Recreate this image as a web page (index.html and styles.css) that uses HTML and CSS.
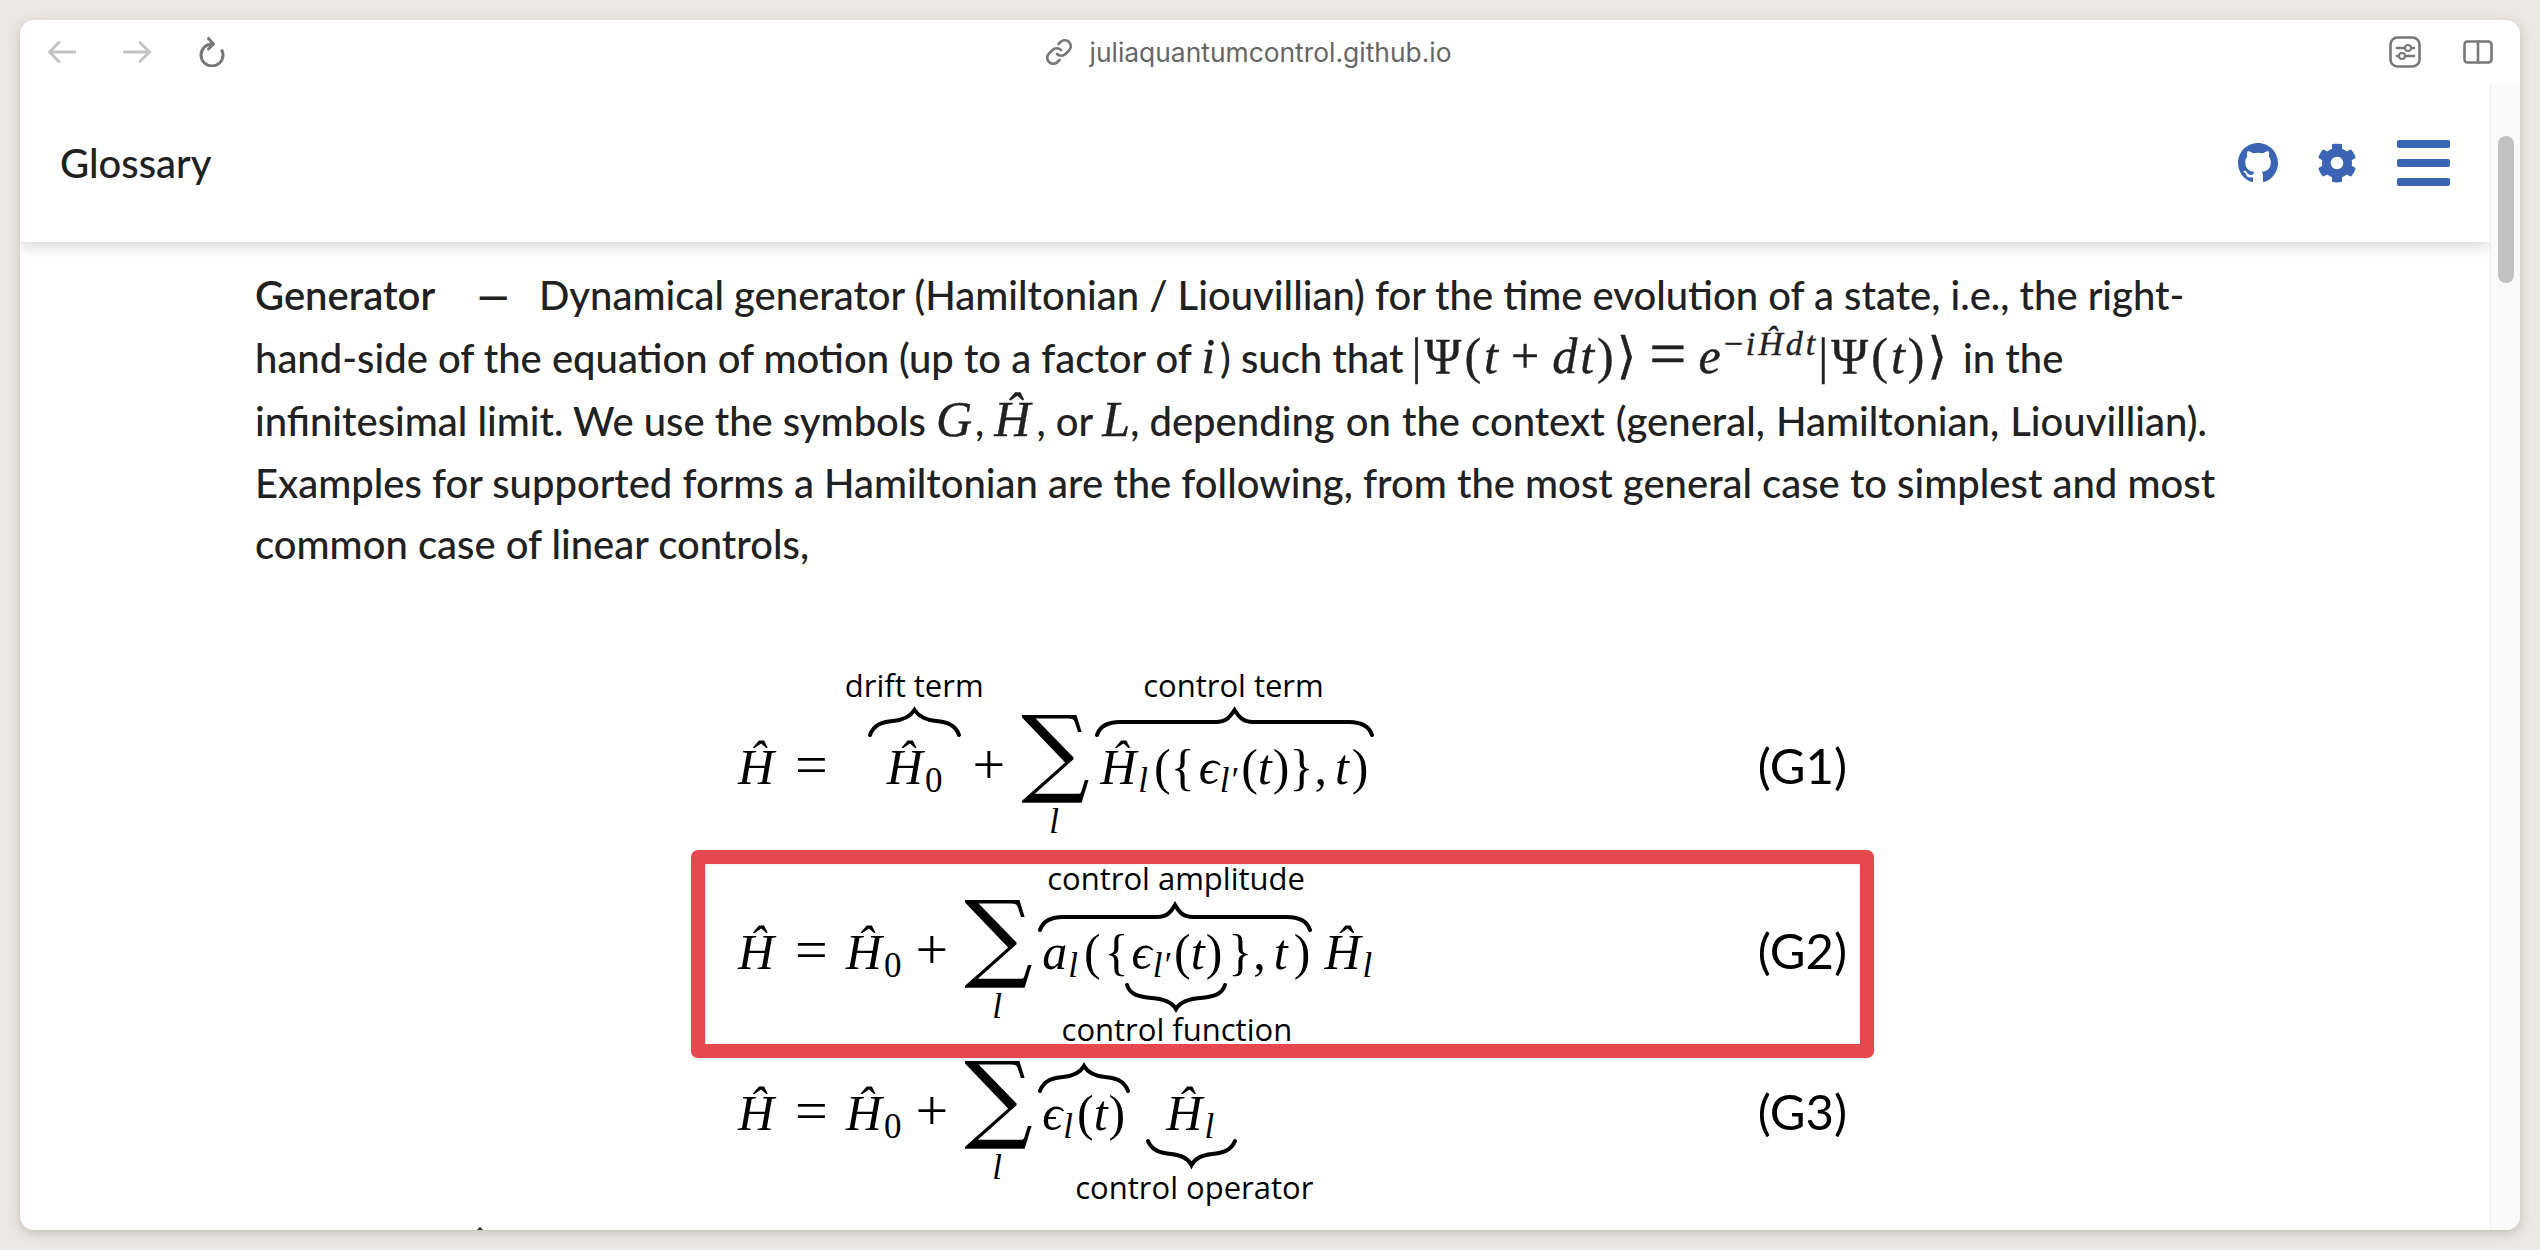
FILE: index.html
```html
<!DOCTYPE html>
<html lang="en">
<head>
<meta charset="utf-8">
<title>Glossary</title>
<link rel="stylesheet" href="styles.css">
</head>
<body>
<div class="window">
  <div class="toolbar">
    <div class="tb-left">
      <svg class="ic-arrow" viewBox="0 0 28 22"><path d="M27 11H2M11 1.500L1.500 11l9.500 9.500"/></svg>
      <svg class="ic-arrow" viewBox="0 0 28 22"><path d="M1 11h25M17 1.500L26.500 11 17 20.500"/></svg>
      <svg class="ic-reload" viewBox="0 0 26 30"><path d="M13 7a11 11 0 1 0 11 11c0-1.800-.4-3.200-1-4.500M9.500 1.500L14.500 7l-5 5"/></svg>
    </div>
    <div class="url">
      <svg class="ic-link" viewBox="0 0 26 26"><path d="M11 15a6 6 0 0 0 8.500 0l3.500-3.500a6 6 0 0 0-8.500-8.500l-2 2M15 11a6 6 0 0 0-8.500 0L3 14.500a6 6 0 0 0 8.500 8.500l2-2"/></svg>
      <span>juliaquantumcontrol.github.io</span>
    </div>
    <div class="tb-right">
      <svg class="ic-sliders" viewBox="0 0 32 32"><rect x="1.500" y="1.500" width="29" height="29" rx="7"/><path d="M8 12h17M8 20h17"/><circle class="dot" cx="19" cy="12" r="3"/><circle class="dot" cx="13" cy="20" r="3"/></svg>
      <svg class="ic-split" viewBox="0 0 30 24"><rect x="1.500" y="1.500" width="27" height="21" rx="3"/><path d="M15 1.500v21"/></svg>
    </div>
  </div>
  <div class="page">
    <div class="main">
      <header class="header">
        <h1 class="title">Glossary</h1>
        <div class="actions">
          <svg class="ic-gh" viewBox="0 0 16 16"><path d="M8 0C3.580 0 0 3.580 0 8c0 3.540 2.290 6.530 5.470 7.590.4.070.55-.17.55-.38 0-.19-.01-.82-.01-1.490-2.010.37-2.530-.49-2.690-.94-.09-.23-.48-.94-.82-1.130-.28-.15-.68-.52-.01-.53.63-.01 1.080.58 1.230.82.72 1.210 1.870.87 2.330.66.070-.52.28-.87.51-1.070-1.780-.2-3.640-.89-3.640-3.950 0-.87.31-1.590.82-2.150-.08-.2-.36-1.020.08-2.120 0 0 .67-.21 2.200.82.64-.18 1.320-.27 2-.27.68 0 1.360.09 2 .27 1.530-1.040 2.200-.82 2.200-.82.44 1.100.16 1.920.08 2.120.51.56.82 1.270.82 2.150 0 3.070-1.870 3.750-3.650 3.950.29.25.54.73.54 1.480 0 1.070-.01 1.930-.01 2.200 0 .21.15.46.55.38A8.013 8.013 0 0 0 16 8c0-4.420-3.580-8-8-8z"/></svg>
          <svg class="ic-gear" viewBox="0 0 512 512"><path d="M487.400 315.700l-42.600-24.600c4.300-23.200 4.300-47 0-70.200l42.600-24.600c4.900-2.800 7.100-8.600 5.500-14-11.100-35.600-30-67.800-54.700-94.600-3.800-4.100-10-5.100-14.800-2.300L380.800 110c-17.900-15.400-38.500-27.300-60.800-35.100V25.800c0-5.600-3.900-10.500-9.400-11.700-36.700-8.200-74.300-7.800-109.200 0-5.500 1.200-9.400 6.100-9.400 11.700V75c-22.200 7.900-42.800 19.800-60.800 35.100L88.700 85.500c-4.900-2.800-11-1.900-14.800 2.300-24.700 26.700-43.600 58.900-54.700 94.600-1.700 5.400.6 11.200 5.500 14L67.300 221c-4.300 23.200-4.300 47 0 70.200l-42.600 24.600c-4.900 2.800-7.100 8.600-5.500 14 11.100 35.600 30 67.800 54.700 94.600 3.800 4.100 10 5.100 14.800 2.300l42.600-24.600c17.900 15.400 38.500 27.300 60.800 35.100v49.200c0 5.600 3.900 10.500 9.400 11.700 36.700 8.200 74.300 7.800 109.200 0 5.500-1.200 9.400-6.100 9.400-11.700v-49.200c22.200-7.900 42.800-19.800 60.800-35.100l42.600 24.600c4.900 2.800 11 1.900 14.800-2.300 24.700-26.700 43.600-58.900 54.700-94.600 1.500-5.500-.7-11.300-5.600-14.100zM256 336c-44.100 0-80-35.900-80-80s35.900-80 80-80 80 35.900 80 80-35.900 80-80 80z"/></svg>
          <div class="burger"><span></span><span></span><span></span></div>
        </div>
      </header>
      <article class="article">
        <p class="para">
          <span class="ln ln1"><span class="term">Generator</span><span class="dash">—</span>Dynamical generator (Hamiltonian / Liouvillian) for the time evolution of a state, i.e., the right-</span>
          <span class="ln ln2">hand-side of the equation of motion (up to a factor of <i class="im im-i">i</i>) such that <span class="im-r">|Ψ(<i>t</i><span class="bin">+</span><i>dt</i>)⟩<span class="rel">=</span><i>e</i><sup>−<i>iĤdt</i></sup>|Ψ(<i>t</i>)⟩</span> in the</span>
          <span class="ln ln3">infinitesimal limit. We use the symbols <i class="im pad3">G</i>, <i class="im pad6">Ĥ</i>, or <i class="im">L</i>, <span class="tail">depending on the context (general, Hamiltonian, Liouvillian).</span></span>
          <span class="ln ln4">Examples for supported forms a Hamiltonian are the following, from the most general case to simplest and most</span>
          <span class="ln ln5">common case of linear controls,</span>
        </p>

        <div class="eqs">
          <div class="eq r1">
            <i>Ĥ</i><span class="op ml21">=</span>
            <span class="over b-h0 ml59">
              <i>Ĥ</i><span class="sub ml2">0</span>
              <svg class="brace bo1" viewBox="0 0 91 26"><path d="M1 26C5 15 14 13 24 12 34 11 41 8 45.500 1 50 8 57 11 67 12 77 13 86 15 90 26"/></svg>
              <span class="label lb1">drift term</span>
            </span>
            <span class="op ml30">+</span>
            <span class="sum ml16">∑<i class="sum-l">l</i></span>
            <span class="over ml14">
              <i>Ĥ</i><i class="sub ml2">l</i><span class="ml6">(</span><span>{</span><i class="ml4">ϵ</i><i class="sub ml1">l′</i><span class="ml4">(</span><i>t</i><span class="ml1">)</span><span>}</span><span class="ml1">,</span><i class="ml8">t</i><span class="ml3">)</span>
              <svg class="brace bo2" viewBox="0 0 277 26"><path d="M1 26C4 17 12 13 24 13H120C130 13 134 8 138.500 1 143 8 147 13 157 13H253C265 13 273 17 276 26"/></svg>
              <span class="label lb2">control term</span>
            </span>
            <span class="tag">(G1)</span>
          </div>

          <div class="eq r2">
            <i>Ĥ</i><span class="op ml21">=</span>
            <i class="ml18">Ĥ</i><span class="sub ml2">0</span>
            <span class="op ml14">+</span>
            <span class="sum ml16">∑<i class="sum-l">l</i></span>
            <span class="over ml13">
              <i>a</i><i class="sub ml1">l</i><span class="ml6">(</span><span class="ml4">{</span>
              <span class="under ml3"><i>ϵ</i><i class="sub ml1">l′</i><span class="ml4">(</span><i>t</i><span class="ml1">)</span>
                <svg class="brace bu1" viewBox="0 0 100 26"><path d="M1 1C4 11 14 13 26 14 38 15 46 18 50 25 54 18 62 15 74 14 86 13 96 11 99 1"/></svg>
                <span class="label lb3">control function</span>
              </span>
              <span class="ml6">}</span><span class="ml1">,</span><i class="ml8">t</i><span class="ml6">)</span>
              <svg class="brace bo3" viewBox="0 0 272 26"><path d="M1 26C4 17 12 13 24 13H118C128 13 132 8 136 1 140 8 144 13 154 13H248C260 13 268 17 271 26"/></svg>
              <span class="label lb4">control amplitude</span>
            </span>
            <i class="ml14">Ĥ</i><i class="sub ml2">l</i>
            <span class="tag">(G2)</span>
          </div>

          <div class="eq r3">
            <i>Ĥ</i><span class="op ml21">=</span>
            <i class="ml18">Ĥ</i><span class="sub ml2">0</span>
            <span class="op ml14">+</span>
            <span class="sum ml16">∑<i class="sum-l">l</i></span>
            <span class="over ml13">
              <i>ϵ</i><i class="sub ml1">l</i><span class="ml4">(</span><i>t</i><span class="ml1">)</span>
              <svg class="brace bo4" viewBox="0 0 90 26"><path d="M1 26C5 15 14 13 24 12 34 11 41 8 45 1 49 8 56 11 66 12 76 13 85 15 89 26"/></svg>
            </span>
            <span class="over ml41">
              <i>Ĥ</i><i class="sub ml2">l</i>
              <svg class="brace bu2" viewBox="0 0 89 26"><path d="M1 1C5 11 14 13 24 14 34 15 41 18 44.500 25 48 18 55 15 65 14 75 13 84 11 88 1"/></svg>
              <span class="label lb5">control operator</span>
            </span>
            <span class="tag">(G3)</span>
          </div>
        </div>
      </article>
    </div>
    <div class="scrollbar"><div class="thumb"></div></div>
  </div>
  <div class="cut-mark"></div>
  <div class="highlight"></div>
</div>
</body>
</html>
```
FILE: styles.css
```css
* { box-sizing: border-box; }
html, body { margin: 0; height: 100%; }
body {
  background: #ece9e4;
  padding: 20px;
  font-family: Lato, "Liberation Sans", sans-serif;
  overflow: hidden;
}
.window {
  position: relative;
  width: 2500px;
  height: 1210px;
  background: #fff;
  border-radius: 14px;
  overflow: hidden;
  display: flex;
  flex-direction: column;
  box-shadow: 0 3px 12px rgba(60, 50, 40, .25);
}

/* toolbar */
.toolbar {
  height: 64px;
  flex: none;
  display: grid;
  grid-template-columns: 1fr auto 1fr;
  align-items: center;
  padding: 0 27px 0 28px;
}
.tb-left { display: flex; align-items: center; gap: 47px; }
.tb-left svg, .tb-right svg { fill: none; stroke-linecap: round; stroke-linejoin: round; }
.ic-arrow { width: 28px; height: 22px; stroke: #c4c4c4; stroke-width: 3; fill: none; stroke-linecap: round; stroke-linejoin: round; }
.ic-reload { width: 26px; height: 30px; stroke: #777; stroke-width: 3; margin-left: 1px; }
.url {
  display: flex;
  align-items: center;
  gap: 18px;
  margin-right: 44px;
  font-family: Inter, "Liberation Sans", sans-serif;
  font-size: 26.400px;
  color: #666;
}
.ic-link { width: 26px; height: 26px; fill: none; stroke: #777; stroke-width: 2.600; stroke-linecap: round; }
.tb-right { display: flex; justify-content: flex-end; align-items: center; gap: 42px; }
.ic-sliders { width: 32px; height: 32px; stroke: #777; stroke-width: 2.600; }
.ic-sliders .dot { fill: #fff; stroke-width: 2; }
.ic-split { width: 30px; height: 24px; stroke: #777; stroke-width: 2.600; }

/* page */
.page { flex: 1; display: flex; min-height: 0; }
.main { flex: 1; min-width: 0; overflow: hidden; display: flex; flex-direction: column; }
.scrollbar {
  width: 30px;
  flex: none;
  background: #fafafa;
  border-left: 1px solid #eee;
  padding: 52px 6px 0 7px;
}
.thumb { width: 16px; height: 147px; background: #c1c1c1; border-radius: 8px; }

/* header */
.header {
  height: 158px;
  flex: none;
  display: flex;
  justify-content: space-between;
  align-items: center;
  padding: 0 40px;
  box-shadow: 0 4px 14px rgba(0, 0, 0, .17);
  position: relative;
}
.title { margin: 0; font-size: 40px; font-weight: 500; color: #212121; }
.actions { display: flex; align-items: center; }
.ic-gh { width: 40px; height: 40px; fill: #3b64b5; }
.ic-gear { width: 40px; height: 40px; fill: #3b64b5; margin-left: 39px; }
.burger { width: 53px; margin-left: 40px; display: flex; flex-direction: column; gap: 11px; }
.burger span { height: 8px; border-radius: 2px; background: #3b64b5; }

/* article */
.article { padding: 21px 0 0 235px; color: #212121; }
.para { margin: 0; font-size: 40px; font-weight: 500; white-space: nowrap; }
.ln { display: block; }
.ln1 { line-height: 64px; height: 64px; }
.ln2 { line-height: 63px; height: 63px; }
.ln3 { line-height: 63px; height: 63px; }
.ln4 { line-height: 60.500px; height: 60.500px; }
.ln5 { line-height: 61px; height: 61px; }
.term { font-weight: 600; }
.dash { margin: 0 30px 0 42px; font-weight: 700; }
.im { font-family: "Liberation Serif", serif; font-size: 50px; line-height: 0; -webkit-text-stroke: .4px #212121; }
.im-i { margin-right: 5px; }
.pad3 { padding-right: 3px; }
.pad6 { padding-right: 6px; }
.tail { word-spacing: 1px; }
.im-r {
  font-family: "Liberation Serif", "DejaVu Serif", serif;
  font-size: 50px;
  line-height: 0;
  letter-spacing: 3px;
  margin: 0 3px 0 -2px;
  -webkit-text-stroke: .4px #212121;
}
.im-r sup { font-size: 34px; line-height: 0; }
.bin { margin: 0 10px; }
.rel { margin: 0 9px 0 10px; font-size: 66px; line-height: 0; vertical-align: -3px; }

/* equations */
.eqs { margin: 151px 0 0 483px; width: 1109px; color: #000; }
.eq {
  display: flex;
  align-items: baseline;
  font-family: "Liberation Serif", "DejaVu Serif", serif;
  font-size: 50px;
  line-height: 50px;
}
.r1 { height: 185px; }
.r2 { height: 161px; }
.r3 { height: 100px; }
.sub { font-size: 35px; line-height: 20px; position: relative; top: 8px; }
.op { font-size: 58px; line-height: 50px; }
.over, .under { position: relative; display: inline-flex; align-items: baseline; }
.sum { position: relative; width: 65px; font-family: "DejaVu Serif", serif; font-size: 96px; line-height: 50px; text-align: center; display: inline-block; }
.sum-l { position: absolute; left: 28px; top: 76px; font-family: "Liberation Serif", serif; font-size: 35px; line-height: 40px; }
.brace { position: absolute; height: 26px; overflow: visible; }
.brace path { fill: none; stroke: #000; stroke-width: 4; stroke-linecap: round; }
.bo1 { left: -18px; top: -33px; width: 91px; }
.bo2 { left: -4px; top: -33px; width: 277px; }
.bo3 { left: -3px; top: -23px; width: 272px; }
.bo4 { left: -3px; top: -23px; width: 90px; }
.bu1 { left: -6px; top: 57px; width: 100px; }
.bu2 { left: -19px; top: 52px; width: 89px; }
.label {
  position: absolute;
  white-space: nowrap;
  font-family: "Open Sans", "Liberation Sans", sans-serif;
  font-size: 31px;
  line-height: 36px;
  color: #000;
}
.lb1 { left: -42px; top: -75px; }
.lb2 { left: 43px; top: -75px; }
.lb3 { left: -70px; top: 84px; }
.lb4 { left: 5px; top: -67px; }
.lb5 { left: -91px; top: 81px; }
.tag { margin-left: auto; font-family: Lato, "Liberation Sans", sans-serif; font-size: 49px; }

/* spacing between math atoms */
.ml1 { margin-left: 1px; }
.ml2 { margin-left: 2px; }
.ml3 { margin-left: 3px; }
.ml4 { margin-left: 4px; }
.ml6 { margin-left: 6px; }
.ml8 { margin-left: 8px; }
.ml13 { margin-left: 13px; }
.ml14 { margin-left: 14px; }
.ml16 { margin-left: 16px; }
.ml18 { margin-left: 18px; }
.ml21 { margin-left: 21px; }
.ml30 { margin-left: 30px; }
.ml41 { margin-left: 41px; }
.ml59 { margin-left: 59px; }

/* overlays */
.highlight {
  position: absolute;
  left: 671px;
  top: 830px;
  width: 1183px;
  height: 208px;
  border: 14px solid #e5484d;
  border-radius: 7px;
  box-shadow: 0 1px 3px rgba(0, 0, 0, .12), inset 0 1px 3px rgba(0, 0, 0, .08);
}
.cut-mark {
  position: absolute;
  left: 457px;
  bottom: 0;
  width: 0;
  height: 0;
  border: 3px solid transparent;
  border-top: 0;
  border-bottom: 3px solid #212121;
}
```
